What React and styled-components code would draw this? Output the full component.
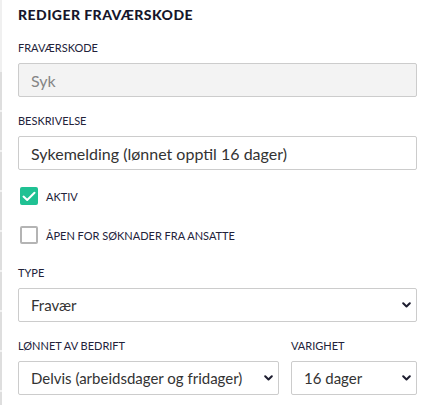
import React, { useState } from "react";
import styled, { createGlobalStyle } from "styled-components";

const GlobalStyle = createGlobalStyle`
  html, body {
    margin: 0;
    padding: 0;
    background: #ffffff;
    font-family: "Lato", "Open Sans", sans-serif;
  }
`;

function Chevron() {
  return (
    <svg width="9" height="6" viewBox="0 0 9 6">
      <path
        d="M1.2 1.2 L4.5 4.5 L7.8 1.2"
        fill="none"
        stroke="#1d1d2f"
        strokeWidth="2"
        strokeLinecap="round"
        strokeLinejoin="round"
      />
    </svg>
  );
}

function Tick() {
  return (
    <svg width="14" height="11" viewBox="0 0 14 11">
      <path
        d="M1.5 5.6 L5.2 9 L12.5 1.8"
        fill="none"
        stroke="#ffffff"
        strokeWidth="2"
        strokeLinecap="round"
        strokeLinejoin="round"
      />
    </svg>
  );
}

function SelectField({ value, options, onChange }) {
  return (
    <SelectWrap>
      <Select value={value} onChange={(e) => onChange(e.target.value)}>
        {options.map((o) => (
          <option key={o}>{o}</option>
        ))}
      </Select>
      <ChevronBox>
        <Chevron />
      </ChevronBox>
    </SelectWrap>
  );
}

function CheckField({ checked, label, onToggle }) {
  return (
    <CheckRow onClick={onToggle}>
      <Box $checked={checked}>{checked && <Tick />}</Box>
      <CheckLabel>{label}</CheckLabel>
    </CheckRow>
  );
}

export default function App() {
  const [beskrivelse, setBeskrivelse] = useState(
    "Sykemelding (lønnet opptil 16 dager)"
  );
  const [aktiv, setAktiv] = useState(true);
  const [aapen, setAapen] = useState(false);
  const [type, setType] = useState("Fravær");
  const [lonnet, setLonnet] = useState("Delvis (arbeidsdager og fridager)");
  const [varighet, setVarighet] = useState("16 dager");

  return (
    <Page>
      <GlobalStyle />
      <SideStrip />
      <Panel>
        <Title>REDIGER FRAVÆRSKODE</Title>

        <Field>
          <Label>FRAVÆRSKODE</Label>
          <Input value="Syk" disabled readOnly />
        </Field>

        <Field>
          <Label>BESKRIVELSE</Label>
          <Input
            value={beskrivelse}
            onChange={(e) => setBeskrivelse(e.target.value)}
          />
        </Field>

        <Checks>
          <CheckField
            checked={aktiv}
            label="AKTIV"
            onToggle={() => setAktiv(!aktiv)}
          />
          <CheckField
            checked={aapen}
            label="ÅPEN FOR SØKNADER FRA ANSATTE"
            onToggle={() => setAapen(!aapen)}
          />
        </Checks>

        <Field>
          <Label>TYPE</Label>
          <SelectField
            value={type}
            options={["Fravær", "Ferie", "Permisjon"]}
            onChange={setType}
          />
        </Field>

        <Row>
          <Field>
            <Label>LØNNET AV BEDRIFT</Label>
            <SelectField
              value={lonnet}
              options={[
                "Delvis (arbeidsdager og fridager)",
                "Ja",
                "Nei",
              ]}
              onChange={setLonnet}
            />
          </Field>
          <Field>
            <Label>VARIGHET</Label>
            <SelectField
              value={varighet}
              options={["16 dager", "3 dager", "8 dager"]}
              onChange={setVarighet}
            />
          </Field>
        </Row>
      </Panel>
    </Page>
  );
}

const Page = styled.div`
  display: flex;
  width: 430px;
  height: 405px;
  overflow: hidden;
`;

const SideStrip = styled.div`
  width: 2px;
  flex-shrink: 0;
  background: linear-gradient(
      to bottom,
      #f0f0f0 0,
      #f0f0f0 72px,
      transparent 72px
    ),
    repeating-linear-gradient(
      to bottom,
      #dedede 0,
      #dedede 38px,
      #f2f2f2 38px,
      #f2f2f2 40px
    );
  background-position: 0 0, 0 72px;
`;

const Panel = styled.div`
  flex: 1;
  padding: 6px 13px 0 16px;
  display: flex;
  flex-direction: column;
  color: #1d1d35;
`;

const Title = styled.h2`
  margin: 0 0 17px;
  font-size: 14px;
  font-weight: 900;
  letter-spacing: 0.45px;
  line-height: 18px;
  color: #16162b;
`;

const Field = styled.div`
  display: flex;
  flex-direction: column;
  margin-bottom: 17px;
`;

const Label = styled.label`
  font-size: 11px;
  line-height: 14px;
  margin-bottom: 8px;
  color: #22223a;
`;

const Input = styled.input`
  box-sizing: border-box;
  height: 34px;
  width: 100%;
  padding: 0 12px;
  border: 1px solid #cccccc;
  border-radius: 2px;
  font-family: inherit;
  font-size: 16px;
  color: #333333;
  background: #ffffff;
  outline: none;

  &:disabled {
    background: #f3f3f3;
    color: #858585;
  }
`;

const Checks = styled.div`
  display: flex;
  flex-direction: column;
  gap: 21px;
  margin: 0 0 22px;
`;

const CheckRow = styled.div`
  display: flex;
  align-items: center;
  gap: 8px;
  cursor: pointer;
  padding-left: 2px;
`;

const Box = styled.span`
  box-sizing: border-box;
  width: 18px;
  height: 18px;
  border-radius: 2px;
  display: flex;
  align-items: center;
  justify-content: center;
  background: ${(p) => (p.$checked ? "#1fc193" : "#ffffff")};
  border: 2px solid ${(p) => (p.$checked ? "#1fc193" : "#b4b4b4")};
`;

const CheckLabel = styled.span`
  font-size: 11px;
  color: #22223a;
`;

const SelectWrap = styled.div`
  position: relative;
  width: 100%;
`;

const Select = styled.select`
  box-sizing: border-box;
  appearance: none;
  width: 100%;
  height: 34px;
  padding: 0 30px 0 12px;
  border: 1px solid #cccccc;
  border-radius: 2px;
  background: #ffffff;
  font-family: inherit;
  font-size: 15px;
  color: #333333;
  outline: none;
`;

const ChevronBox = styled.span`
  position: absolute;
  right: 6px;
  top: 50%;
  transform: translateY(-50%);
  display: flex;
  pointer-events: none;
`;

const Row = styled.div`
  display: grid;
  grid-template-columns: 261px 1fr;
  gap: 12px;
`;
